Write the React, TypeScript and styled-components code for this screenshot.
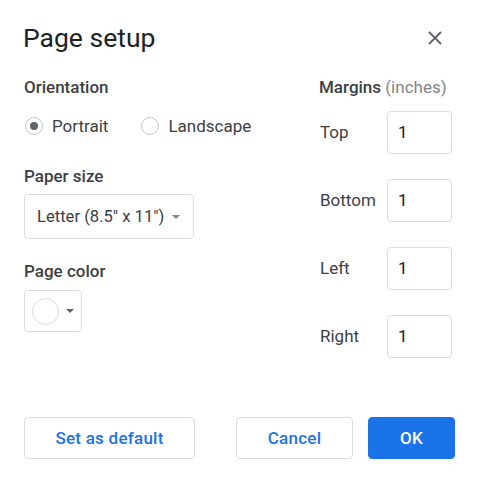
import React, { useState } from "react";
import styled, { createGlobalStyle } from "styled-components";

const GlobalStyle = createGlobalStyle`
    html, body {
        margin: 0;
        padding: 0;
        background: #ffffff;
    }
    body {
        font-family: Roboto, "Liberation Sans", Arial, sans-serif;
        color: #3c4043;
    }
    * {
        box-sizing: border-box;
    }
`;

const Dialog = styled.div`
    width: 477px;
    height: 483px;
    padding: 22px 22px 0 24px;
    background: #ffffff;
`;

const Header = styled.div`
    display: flex;
    align-items: center;
    justify-content: space-between;
    height: 32px;
`;

const Title = styled.h1`
    margin: 0;
    font-size: 26.5px;
    line-height: 32px;
    font-weight: 400;
    color: #202124;
    margin-left: -1px;
`;

const CloseButton = styled.button`
    width: 40px;
    height: 40px;
    border: none;
    background: transparent;
    display: flex;
    align-items: center;
    justify-content: center;
    padding: 0;
    cursor: pointer;
`;

const Body = styled.div`
    display: flex;
    margin-top: 23px;
`;

const LeftColumn = styled.div`
    width: 295px;
    display: flex;
    flex-direction: column;
`;

const RightColumn = styled.div`
    width: 133px;
    display: flex;
    flex-direction: column;
`;

const SectionLabel = styled.div<{ $gap?: number }>`
    margin-top: ${(p) => p.$gap ?? 0}px;
    font-size: 17px;
    line-height: 20px;
    font-weight: 500;
    color: #3c4043;
    white-space: nowrap;
`;

const Hint = styled.span`
    font-weight: 400;
    color: #80868b;
`;

const RadioRow = styled.div`
    display: flex;
    align-items: center;
    gap: 32px;
    margin-top: 17px;
    height: 24px;
`;

const RadioOption = styled.label`
    display: flex;
    align-items: center;
    gap: 9px;
    font-size: 17px;
    color: #3c4043;
    cursor: pointer;
`;

const RadioCircle = styled.span<{ $checked: boolean }>`
    width: 18px;
    height: 18px;
    border-radius: 50%;
    border: 1.5px solid #c4c7ca;
    display: flex;
    align-items: center;
    justify-content: center;
    margin-left: 1px;

    &::after {
        content: "";
        width: 8px;
        height: 8px;
        border-radius: 50%;
        background: ${(p) => (p.$checked ? "#5f6368" : "transparent")};
    }
`;

const SelectBox = styled.div`
    margin-top: 8px;
    width: 170px;
    height: 45px;
    border: 1px solid #dadce0;
    border-radius: 4px;
    display: flex;
    align-items: center;
    padding: 0 12px;
    font-size: 16.6px;
    color: #3c4043;
    gap: 8px;
    white-space: nowrap;
`;

const Caret = styled.span<{ $color: string; $w: number }>`
    width: 0;
    height: 0;
    border-left: ${(p) => p.$w / 2}px solid transparent;
    border-right: ${(p) => p.$w / 2}px solid transparent;
    border-top: ${(p) => p.$w / 2}px solid ${(p) => p.$color};
`;

const ColorButton = styled.div`
    margin-top: 9.5px;
    width: 58px;
    height: 42px;
    border: 1px solid #dadce0;
    border-radius: 4px;
    display: flex;
    align-items: center;
    padding-left: 7px;
    gap: 7px;
`;

const Swatch = styled.span`
    width: 27px;
    height: 27px;
    border-radius: 50%;
    border: 1px solid #dadce0;
    background: #ffffff;
`;

const MarginRows = styled.div`
    margin-top: 13.5px;
    display: flex;
    flex-direction: column;
    gap: 25px;
`;

const MarginRow = styled.div`
    display: flex;
    align-items: center;
    justify-content: space-between;
    padding-left: 1px;
`;

const MarginLabel = styled.span`
    font-size: 17px;
    color: #3c4043;
`;

const NumberInput = styled.input`
    width: 65px;
    height: 43px;
    border: 1px solid #dadce0;
    border-radius: 4px;
    padding: 0 10px;
    font-family: inherit;
    font-size: 17px;
    color: #202124;
    outline: none;
`;

const Footer = styled.div`
    display: flex;
    align-items: center;
    margin-top: 59px;
`;

const Actions = styled.div`
    display: flex;
    gap: 15px;
    margin-left: auto;
`;

const Button = styled.button<{ $primary?: boolean; $width: number }>`
    width: ${(p) => p.$width}px;
    height: 42px;
    border-radius: 4px;
    border: 1px solid ${(p) => (p.$primary ? "#1a73e8" : "#dadce0")};
    background: ${(p) => (p.$primary ? "#1a73e8" : "#ffffff")};
    color: ${(p) => (p.$primary ? "#ffffff" : "#1a73e8")};
    font-family: Roboto, "Liberation Sans", Arial, sans-serif;
    font-size: 17px;
    font-weight: 500;
    letter-spacing: 0.25px;
    cursor: pointer;
`;

const margins = ["Top", "Bottom", "Left", "Right"];

const App: React.FC = () => {
    const [orientation, setOrientation] = useState<"portrait" | "landscape">("portrait");

    return (
        <>
            <GlobalStyle />
            <Dialog>
                <Header>
                    <Title>Page setup</Title>
                    <CloseButton aria-label="Close">
                        <svg width="14" height="14" viewBox="0 0 14 14">
                            <path d="M1 1L13 13M13 1L1 13" stroke="#5f6368" strokeWidth="1.8" />
                        </svg>
                    </CloseButton>
                </Header>

                <Body>
                    <LeftColumn>
                        <SectionLabel>Orientation</SectionLabel>
                        <RadioRow>
                            <RadioOption onClick={() => setOrientation("portrait")}>
                                <RadioCircle $checked={orientation === "portrait"} />
                                Portrait
                            </RadioOption>
                            <RadioOption onClick={() => setOrientation("landscape")}>
                                <RadioCircle $checked={orientation === "landscape"} />
                                Landscape
                            </RadioOption>
                        </RadioRow>

                        <SectionLabel $gap={28}>Paper size</SectionLabel>
                        <SelectBox>
                            Letter (8.5" x 11")
                            <Caret $color="#80868b" $w={9} />
                        </SelectBox>

                        <SectionLabel $gap={21.5}>Page color</SectionLabel>
                        <ColorButton>
                            <Swatch />
                            <Caret $color="#5f6368" $w={8} />
                        </ColorButton>
                    </LeftColumn>

                    <RightColumn>
                        <SectionLabel>
                            Margins <Hint>(inches)</Hint>
                        </SectionLabel>
                        <MarginRows>
                            {margins.map((m) => (
                                <MarginRow key={m}>
                                    <MarginLabel>{m}</MarginLabel>
                                    <NumberInput defaultValue="1" />
                                </MarginRow>
                            ))}
                        </MarginRows>
                    </RightColumn>
                </Body>

                <Footer>
                    <Button $width={171}>Set as default</Button>
                    <Actions>
                        <Button $width={117}>Cancel</Button>
                        <Button $primary $width={87}>OK</Button>
                    </Actions>
                </Footer>
            </Dialog>
        </>
    );
};

export default App;
